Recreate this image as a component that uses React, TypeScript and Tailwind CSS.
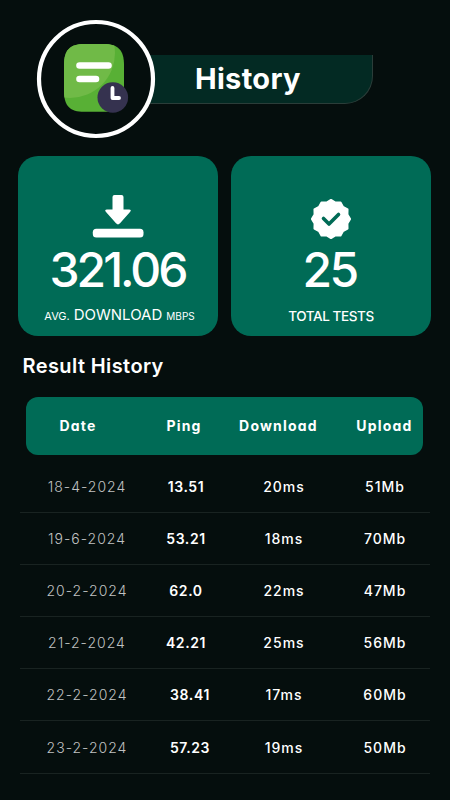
import type { ReactNode } from "react";

const results = [
  { date: "18-4-2024", ping: "13.51", download: "20ms", upload: "51Mb" },
  { date: "19-6-2024", ping: "53.21", download: "18ms", upload: "70Mb" },
  { date: "20-2-2024", ping: "62.0", download: "22ms", upload: "47Mb" },
  { date: "21-2-2024", ping: "42.21", download: "25ms", upload: "56Mb" },
  { date: "22-2-2024", ping: "38.41", download: "17ms", upload: "60Mb", shifted: true },
  { date: "23-2-2024", ping: "57.23", download: "19ms", upload: "50Mb", shifted: true },
];

function HistoryIcon() {
  return (
    <svg width="120" height="120" viewBox="0 0 120 120" className="block">
      <circle cx="60" cy="60" r="57" fill="#050e0d" stroke="#fff" strokeWidth="4.2" />
      <clipPath id="note">
        <path d="M28 46C28 31 34 25 48 25H68C82 25 88 31 88 46V72C88 87 82 92.800 68 92.800H48C34 92.800 28 87 28 72Z" />
      </clipPath>
      <g clipPath="url(#note)">
        <rect x="28" y="25" width="60" height="68" fill="#58b035" />
        <circle cx="34" cy="34" r="45" fill="#70ba47" />
      </g>
      <path d="M43.500 46.500H72.500M43.500 60H60" stroke="#fff" strokeWidth="6.600" strokeLinecap="round" />
      <circle cx="76.800" cy="78.500" r="15.300" fill="#35324f" />
      <path d="M76.500 69V79H83" fill="none" stroke="#fff" strokeWidth="3.800" strokeLinecap="round" strokeLinejoin="round" />
    </svg>
  );
}

function DownloadIcon() {
  return (
    <svg width="52" height="44" viewBox="0 0 52 44" fill="#fff" className="mb-[1.5px]">
      <path d="M22.500 1H29.500Q31.500 1 31.500 3V15.500H37Q40 15.500 38 18L28 29.300Q26 31.500 24 29.300L14 18Q12 15.500 15 15.500H20.500V3Q20.500 1 22.500 1Z" />
      <rect x="0.800" y="34.700" width="50.700" height="8.800" rx="3.500" />
    </svg>
  );
}

function VerifiedIcon() {
  const points = Array.from({ length: 24 }, (_, i) => {
    const r = i % 2 ? 17 : 19.1;
    const a = (i * Math.PI) / 12;
    return `${21 + r * Math.sin(a)},${21 - r * Math.cos(a)}`;
  }).join(" ");
  return (
    <svg width="42" height="42" viewBox="0 0 42 42" className="-mb-[1px]">
      <polygon points={points} fill="#fff" stroke="#fff" strokeWidth="2" strokeLinejoin="round" />
      <path d="M13.500 20.500L19 26L28.500 16.500" fill="none" stroke="#006b56" strokeWidth="3.600" strokeLinecap="round" strokeLinejoin="round" />
    </svg>
  );
}

function StatCard({ icon, value, children }: { icon: ReactNode; value: ReactNode; children: ReactNode }) {
  return (
    <div className="flex h-[180px] w-[200px] flex-col items-center rounded-[20px] bg-[#006b56] pt-[37px]">
      <div className="flex h-[46px] items-end">{icon}</div>
      <div className="mt-[6.500px] h-[48px] text-[48px] leading-[48px] font-[450]">{value}</div>
      <div className="mt-[11.500px] flex h-[20px] items-baseline whitespace-nowrap leading-5">{children}</div>
    </div>
  );
}

export default function App() {
  return (
    <div className="h-[800px] w-[450px] overflow-hidden bg-[#050e0d] pt-[19px] text-white [font-family:Inter,'Open_Sans',sans-serif] [font-feature-settings:'cv11']">
      <header className="flex h-[120px] items-center pl-[36px]">
        <div className="z-10">
          <HistoryIcon />
        </div>
        <div className="-ml-[10px] flex h-[49px] w-[227px] items-center rounded-br-[28px] border-r border-b border-[#2b3d39] bg-[#032a23] pl-[49px]">
          <h1 className="text-[29px] leading-none font-bold tracking-[0.3px]">History</h1>
        </div>
      </header>

      <section className="mt-[17.400px] flex gap-[13px] pl-[18px]">
        <StatCard icon={<DownloadIcon />} value={<span className="mr-[1px] tracking-[-3px]">321.06</span>}>
          <span className="ml-[3px] text-[11px]">AVG.</span>
          <span className="ml-1 text-[15px]">DOWNLOAD</span>
          <span className="ml-1 text-[10px]">MBPS</span>
        </StatCard>
        <StatCard icon={<VerifiedIcon />} value={<span className="mr-[3px] tracking-[-2.5px]">25</span>}>
          <span className="pt-[1px] text-[13.500px] font-[450] tracking-[-0.4px]">TOTAL TESTS</span>
        </StatCard>
      </section>

      <h2 className="mt-[17.600px] h-[24px] pl-[22.500px] text-[20px] leading-6 font-semibold tracking-[0.4px]">Result History</h2>

      <div className="mt-[19px] ml-[26px] grid h-[58px] w-[397px] grid-cols-[104px_108px_81px_104px] items-center rounded-[12px] bg-[#006b56] text-center text-[14px] font-bold tracking-[1.2px]">
        <span>Date</span>
        <span>Ping</span>
        <span>Download</span>
        <span className="pr-[10.500px] text-right">Upload</span>
      </div>

      <div className="mt-[5.500px] ml-[20px] w-[410px]">
        {results.map((r) => (
          <div
            key={r.date}
            className="grid h-[52.200px] grid-cols-[134px_64px_132px_70px] items-center border-b border-[#192321] text-center text-[14px] font-medium tracking-[1px]"
          >
            <span className="font-light text-[#c0c2c2]">{r.date}</span>
            <span className={r.shifted ? "pl-[8px] font-semibold tracking-[0.6px]" : "font-semibold tracking-[0.6px]"}>{r.ping}</span>
            <span>{r.download}</span>
            <span>{r.upload}</span>
          </div>
        ))}
      </div>
    </div>
  );
}
